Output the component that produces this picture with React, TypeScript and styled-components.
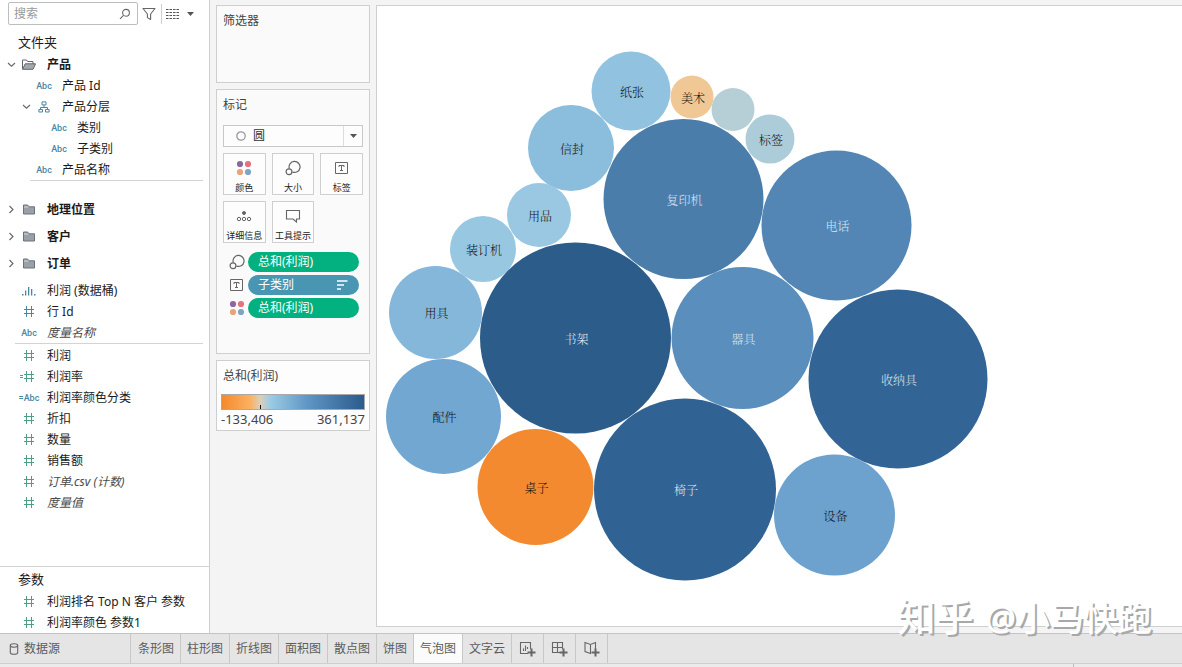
import React from 'react';
import styled, { createGlobalStyle, css } from 'styled-components';

const GlobalStyle = createGlobalStyle`
  *, *::before, *::after { box-sizing: border-box; }
  body {
    margin: 0;
    background: #f4f4f4;
    color: #1a1a1a;
    font-family: 'Noto Sans', 'Noto Sans CJK SC', sans-serif;
    font-size: 12px;
    line-height: 20px;
  }
  button, input, select { font: inherit; color: inherit; }
  svg { display: block; flex: none; }
`;

const BLUE = '#4a87a3';
const GREEN = '#4f9f86';
const GREY = '#666666';

/* ---------- page frame ---------- */

const Page = styled.div`
  position: relative;
  display: flex;
  flex-direction: column;
  min-height: 100vh;
`;

const Workspace = styled.div`
  flex: 1;
  display: grid;
  grid-template-columns: 210px 154px minmax(0, 1fr);
  column-gap: 6px;
`;

const Sidebar = styled.aside`
  display: flex;
  flex-direction: column;
  background: #ffffff;
  border-right: 1px solid #cfcfcf;
`;

const Shelves = styled.div`
  display: flex;
  flex-direction: column;
  gap: 6px;
  padding-top: 5px;
`;

const Canvas = styled.main`
  margin: 5px 0 6px;
  background: #ffffff;
  border: 1px solid #cfcfcf;
  border-right: 0;
`;

/* ---------- data pane ---------- */

const SearchBar = styled.div`
  display: flex;
  align-items: center;
  height: 27px;
  padding: 0 13px 0 8px;
`;

const SearchBox = styled.label`
  display: flex;
  align-items: center;
  width: 130px;
  height: 23px;
  padding: 0 6px 0 5px;
  border: 1px solid #bdbdbd;
  border-radius: 2px;
`;

const SearchInput = styled.input`
  flex: 1;
  min-width: 0;
  padding: 0;
  border: 0;
  outline: 0;
  background: none;
  &::placeholder { color: #999999; opacity: 1; }
`;

const ToolButton = styled.button<{ $divided?: boolean }>`
  display: flex;
  align-items: center;
  gap: 8px;
  height: 20px;
  padding: 0 5px 0 4px;
  border: 0;
  border-left: ${(p) => (p.$divided ? '1px solid #cfcfcf' : '0')};
  background: none;
`;

const PaneTitle = styled.h2`
  margin: 0;
  padding: 2px 18px;
  font-size: 13px;
  font-weight: 400;
  line-height: 20px;
`;

const FieldGroup = styled.div<{ $gap: number }>`
  padding-top: ${(p) => p.$gap}px;
`;

const FieldList = styled.ul<{ $spaced?: boolean }>`
  margin: 0;
  padding: ${(p) => (p.$spaced ? '15px 0 3px' : '0')};
  list-style: none;
`;

const FieldRow = styled.li<{ $level?: number; $tall?: boolean }>`
  display: grid;
  grid-template-columns: 12px 22px 1fr;
  align-items: center;
  height: ${(p) => (p.$tall ? 27 : 21)}px;
  padding-left: ${(p) => 6 + 15 * (p.$level ?? 0)}px;
`;

const Toggle = styled.button`
  display: flex;
  justify-content: center;
  width: 11px;
  padding: 0;
  border: 0;
  background: none;
`;

const IconCell = styled.span<{ $color: string }>`
  grid-column: 2;
  display: flex;
  justify-content: center;
  align-items: center;
  color: ${(p) => p.$color};
`;

const TypeText = styled.span`
  font-family: Roboto, sans-serif;
  font-size: 9px;
  font-weight: 500;
  line-height: 12px;
`;

const FieldName = styled.span<{ $bold?: boolean; $italic?: boolean }>`
  padding-left: 7px;
  white-space: nowrap;
  font-weight: ${(p) => (p.$bold ? 700 : 400)};
  ${(p) => p.$italic && css`
    font-style: italic;
    color: #4a4a4a;
  `}
`;

const Rule = styled.hr<{ $inset: number }>`
  width: auto;
  height: 1px;
  margin: 0 6px 0 ${(p) => p.$inset}px;
  border: 0;
  background: #d4d4d4;
`;

const Parameters = styled.section`
  margin-top: auto;
  border-top: 1px solid #d4d4d4;
`;

/* ---------- shelves ---------- */

const Card = styled.section<{ $minHeight: number }>`
  min-height: ${(p) => p.$minHeight}px;
  padding: 5px 6px;
  border: 1px solid #cfcfcf;
  background: #fafafa;
`;

const CardTitle = styled.h2`
  margin: 0;
  color: #444444;
  font-size: 12px;
  font-weight: 400;
  line-height: 20px;
`;

const MarkPicker = styled.label`
  display: grid;
  grid-template-columns: 29px 1fr 18px;
  align-items: center;
  height: 22px;
  margin-top: 10px;
  border: 1px solid #c8c8c8;
  background: #fdfdfd;
  color: ${GREY};
  svg { justify-self: center; }
  svg:first-child { justify-self: end; margin-right: 7px; }
`;

const MarkSelect = styled.select`
  appearance: none;
  height: 20px;
  padding: 0;
  border: 0;
  border-right: 1px solid #dddddd;
  outline: 0;
  background: none;
  color: #333333;
`;

const MarkGrid = styled.div`
  display: grid;
  grid-template-columns: repeat(3, 1fr);
  gap: 6px;
  margin-top: 6px;
`;

const MarkButton = styled.button`
  display: flex;
  flex-direction: column;
  align-items: center;
  justify-content: space-between;
  height: 42px;
  padding: 6px 0 0;
  border: 1px solid #cfcfcf;
  background: #fdfdfd;
  color: #222222;
  font-size: 9px;
  line-height: 12px;
  white-space: nowrap;
`;

const PillList = styled.ul`
  display: grid;
  gap: 3px;
  margin: 9px 0 0;
  padding: 0 4px 0 6px;
  list-style: none;
`;

const PillRow = styled.li`
  display: grid;
  grid-template-columns: 19px 1fr;
  align-items: center;
`;

const Pill = styled.button<{ $color: string }>`
  display: flex;
  align-items: center;
  justify-content: space-between;
  height: 20px;
  padding: 0 11px 0 10px;
  border: 0;
  border-radius: 10px;
  background: ${(p) => p.$color};
  color: #ffffff;
  line-height: 20px;
`;

const LegendCard = styled(Card)`
  padding: 5px 4px 0;
  background: #fdfdfd;
`;

const LegendTitle = styled(CardTitle)`
  padding-left: 2px;
`;

const Ramp = styled.div`
  display: flex;
  align-items: flex-end;
  height: 16px;
  margin-top: 8px;
  padding-left: 38px;
  border: 1px solid #a9a9a9;
  background: linear-gradient(90deg, #f4892c 0%, #fbb162 20%, #dccfbb 27%, #9bcbe4 34%, #5f96c5 60%, #2a5b8c 100%);
  &::after {
    content: '';
    width: 1px;
    height: 4px;
    background: #111111;
  }
`;

const RampEnds = styled.div`
  display: flex;
  justify-content: space-between;
  color: #444444;
  font-size: 13px;
  line-height: 19px;
`;

/* ---------- sheet tabs ---------- */

const TabBar = styled.nav`
  display: flex;
  height: 31px;
  border-top: 1px solid #c4c4c4;
  border-bottom: 1px solid #cfcfcf;
  background: #e5e5e5;
`;

const Tab = styled.button<{ $active?: boolean }>`
  display: flex;
  align-items: center;
  padding: 0 6px;
  border: 0;
  border-right: 1px solid #c8c8c8;
  background: ${(p) => (p.$active ? '#fbfbfb' : 'transparent')};
  color: #5c5c5c;
  white-space: nowrap;
`;

const SourceTab = styled(Tab)`
  gap: 5px;
  width: 131px;
  margin-right: 1px;
  padding: 0 9px;
`;

const NewSheetTab = styled(Tab)`
  justify-content: center;
  width: 32px;
`;

const StatusBar = styled.footer`
  display: flex;
  justify-content: flex-end;
  height: 3px;
  background: #ebebeb;
`;

const StatusCell = styled.div`
  width: 109px;
  border-left: 1px solid #bdbdbd;
`;

const Watermark = styled.div`
  position: absolute;
  right: 30px;
  bottom: 25px;
  display: flex;
  align-items: baseline;
  gap: 12px;
  color: #ffffff;
  font-size: 34px;
  font-weight: 500;
  line-height: 48px;
  text-shadow: 2px 2px 0 #a8a8a8;
  pointer-events: none;
`;

const WatermarkBrand = styled.span`
  font-size: 38px;
`;

/* ---------- chart ---------- */

const Chart = styled.svg`
  width: 100%;
  height: auto;
  text {
    font-family: 'Noto Serif CJK SC', 'Noto Sans CJK SC', serif;
    font-size: 12px;
    font-weight: 300;
    text-anchor: middle;
    dominant-baseline: central;
  }
`;

type Bubble = { name: string; x: number; y: number; r: number; fill: string; light?: boolean };

const bubbles: Bubble[] = [
  { name: '纸张', x: 254, y: 85, r: 39.5, fill: '#91c3e0' },
  { name: '美术', x: 315, y: 91, r: 21.5, fill: '#efc895' },
  { name: '', x: 356, y: 103.5, r: 21.5, fill: '#b6ced5' },
  { name: '标签', x: 393, y: 133, r: 24.5, fill: '#acccd9' },
  { name: '信封', x: 194, y: 142, r: 43, fill: '#8bbddd' },
  { name: '复印机', x: 306.5, y: 193, r: 80, fill: '#4b7dab', light: true },
  { name: '电话', x: 459.5, y: 219.5, r: 75, fill: '#5386b4', light: true },
  { name: '用品', x: 162, y: 209, r: 32, fill: '#9ac8e2' },
  { name: '装订机', x: 106, y: 243, r: 33, fill: '#98c7e2' },
  { name: '书架', x: 198.5, y: 332, r: 95.5, fill: '#2b5c8a', light: true },
  { name: '用具', x: 58.5, y: 306.5, r: 46.5, fill: '#84b7da' },
  { name: '器具', x: 365.5, y: 332, r: 71, fill: '#5a8ebd', light: true },
  { name: '收纳具', x: 521, y: 373, r: 89.5, fill: '#326595', light: true },
  { name: '配件', x: 66.5, y: 410.5, r: 57.5, fill: '#71a7d0' },
  { name: '桌子', x: 158.5, y: 481, r: 58, fill: '#f48a30' },
  { name: '椅子', x: 308, y: 483.5, r: 91, fill: '#306394', light: true },
  { name: '设备', x: 457.5, y: 509, r: 60.5, fill: '#6ca2cd' },
];

/* ---------- icons ---------- */

const SearchIcon = () => (
  <svg width="12" height="12" viewBox="0 0 12 12" fill="none" stroke="#666" strokeWidth="1.1">
    <circle cx="7" cy="4.8" r="3.4" />
    <path d="M4.5 7.3 1 10.8" />
  </svg>
);

const FilterIcon = () => (
  <svg width="14" height="14" viewBox="0 0 14 14" fill="none" stroke="#666" strokeWidth="1.1" strokeLinejoin="round">
    <path d="M1 1.5h12L8.6 7v5.5L5.4 10.6V7Z" />
  </svg>
);

const ListIcon = () => (
  <svg width="13" height="11" viewBox="0 0 13 11" stroke="#555" strokeWidth="1" strokeDasharray="2.5 1">
    <path d="M0 1.5h13M0 4.5h13M0 7.5h13M0 10.5h13" />
  </svg>
);

const CaretIcon = () => (
  <svg width="7" height="4" viewBox="0 0 7 4" fill="#555">
    <path d="M0 0h7L3.5 4Z" />
  </svg>
);

const Chevron = ({ open }: { open?: boolean }) => (
  <svg width="9" height="9" viewBox="0 0 9 9" fill="none" stroke="#666" strokeWidth="1.1">
    <path d={open ? 'M1 3 4.5 6.2 8 3' : 'M2.5 1 6 4.5 2.5 8'} />
  </svg>
);

const OpenFolderIcon = () => (
  <svg width="14" height="11" viewBox="0 0 14 11" stroke="#666" strokeWidth="1" strokeLinejoin="round">
    <path fill="#fff" d="M.5 10V1h4l1 1.5h5.5V5" />
    <path fill="#a4a9ae" d="M.5 10.3 3.2 4.8h10.3L11 10.3Z" />
  </svg>
);

const FolderIcon = () => (
  <svg width="12" height="11" viewBox="0 0 12 11" stroke="#6c7278" strokeWidth="1">
    <path fill="#9aa0a8" d="M.5 10V1h4.200l1 1.800h5.800V10Z" />
    <path d="M1 3h4.500" stroke="#d5d8db" />
  </svg>
);

const HierarchyIcon = () => (
  <svg width="12" height="12" viewBox="0 0 12 12" fill="none" stroke="currentColor" strokeWidth="1">
    <path d="M4 .9h4v3H4ZM6 4v2.500M2.500 8.500v-2h7v2M.9 8.500h3.600v2.500H.9ZM7.500 8.500h3.600v2.500H7.500Z" />
  </svg>
);

const BinsIcon = () => (
  <svg width="14" height="10" viewBox="0 0 14 10" fill="currentColor">
    <path d="M0 8h1.500v1.500H0ZM3 4.500h1.300v5H3ZM6 1h1.300v8.500H6ZM9 3h1.300v6.500H9ZM12 8h1.500v1.500H12Z" />
  </svg>
);

const HashIcon = ({ calc }: { calc?: boolean }) => (
  <svg
    width={calc ? 20 : 12}
    height="11"
    viewBox={calc ? '-6 0 20 11' : '0 0 12 11'}
    fill="none"
    stroke="currentColor"
    strokeWidth="1"
  >
    {calc ? (
      <path d="M-1 3.500H9M-1 7.500H9M1.500 0v11M6.500 0v11M-5 4.500h3M-5 6.500h3" />
    ) : (
      <path d="M1 3.500h10M1 7.500h10M3.500 0v11M8.500 0v11" />
    )}
  </svg>
);

const ColorIcon = () => (
  <svg width="16" height="16" viewBox="0 0 16 16">
    <circle cx="4" cy="4" r="3.100" fill="#8a6a9c" />
    <circle cx="12" cy="4" r="3.100" fill="#e8717e" />
    <circle cx="4" cy="12" r="3.100" fill="#eba376" />
    <circle cx="12" cy="12" r="3.100" fill="#7ea3c6" />
  </svg>
);

const SizeIcon = () => (
  <svg width="16" height="16" viewBox="0 0 16 16" fill="none" stroke="#666" strokeWidth="1.200">
    <path d="M4.300 8.600A5.500 5.500 0 1 1 7.400 12" />
    <circle cx="4" cy="11.800" r="2.900" />
  </svg>
);

const LabelIcon = () => (
  <svg width="16" height="16" viewBox="0 0 16 16" fill="none" stroke="#666" strokeWidth="1">
    <path d="M1.500 2.500h12v11h-12Z" />
    <path d="M5 7V5.500h5V7M7.500 5.500v5M6 10.500h3" />
  </svg>
);

const DetailIcon = () => (
  <svg width="16" height="16" viewBox="0 0 16 16" fill="none" stroke="#666" strokeWidth="1">
    <circle cx="8" cy="5" r="1.500" fill="#666" />
    <circle cx="3" cy="11" r="1.700" />
    <circle cx="8" cy="11" r="1.700" />
    <circle cx="13" cy="11" r="1.700" />
  </svg>
);

const TooltipIcon = () => (
  <svg width="16" height="16" viewBox="0 0 16 16" fill="none" stroke="#666" strokeWidth="1.100">
    <path d="M1.500 2.500h13v8.500h-3v3L8 11H1.500Z" />
  </svg>
);

const CircleIcon = () => (
  <svg width="10" height="10" viewBox="0 0 10 10" fill="none" stroke="#999" strokeWidth="1.300">
    <circle cx="5" cy="5" r="4.200" />
  </svg>
);

const SortIcon = () => (
  <svg width="11" height="10" viewBox="0 0 11 10" stroke="#fff" strokeWidth="1.600">
    <path d="M0 1h10.500M0 5h7M0 9h4" />
  </svg>
);

const SourceIcon = () => (
  <svg width="10" height="12" viewBox="0 0 10 12" fill="none" stroke="#666" strokeWidth="1.100">
    <ellipse cx="5" cy="2.500" rx="3.700" ry="1.700" />
    <path d="M1.300 2.500v7c0 2.300 7.400 2.300 7.400 0v-7" />
  </svg>
);

const newSheetShapes = {
  sheet: 'M9 12.500H1.500v-11h10V8M4.500 10V7.500M6.500 10V4.500M8.500 8V6',
  dashboard: 'M9 11.500H1.500v-10h10V8M1.500 6.500h10M6.500 1.500v10',
  story: 'M12.500 8V1.500L7.500 3.500 2 1.500v9l5.500 2V3.500',
};

const NewSheetIcon = ({ kind }: { kind: keyof typeof newSheetShapes }) => (
  <svg width="17" height="16" viewBox="0 0 17 16" fill="none" stroke="#666" strokeWidth="1.100">
    <path d={newSheetShapes[kind]} />
    <path d="M12.500 7.500v8M8.500 11.500h8" strokeWidth="2" />
  </svg>
);

/* ---------- fields ---------- */

type FieldType = 'text' | 'calcText' | 'number' | 'calcNumber' | 'bins' | 'hierarchy' | 'folder' | 'openFolder';

type Field = { name: string; type: FieldType; level?: number; measure?: boolean; italic?: boolean };

const typeIcons: Record<FieldType, React.ReactNode> = {
  text: <TypeText>Abc</TypeText>,
  calcText: <TypeText>=Abc</TypeText>,
  number: <HashIcon />,
  calcNumber: <HashIcon calc />,
  bins: <BinsIcon />,
  hierarchy: <HierarchyIcon />,
  folder: <FolderIcon />,
  openFolder: <OpenFolderIcon />,
};

const productFields: Field[] = [
  { name: '产品', type: 'openFolder' },
  { name: '产品 Id', type: 'text', level: 1 },
  { name: '产品分层', type: 'hierarchy', level: 1 },
  { name: '类别', type: 'text', level: 2 },
  { name: '子类别', type: 'text', level: 2 },
  { name: '产品名称', type: 'text', level: 1 },
];

const folders: Field[] = ['地理位置', '客户', '订单'].map((name) => ({ name, type: 'folder' }));

const looseFields: Field[] = [
  { name: '利润 (数据桶)', type: 'bins' },
  { name: '行 Id', type: 'number' },
  { name: '度量名称', type: 'text', italic: true },
];

const measures: Field[] = [
  { name: '利润', type: 'number', measure: true },
  { name: '利润率', type: 'calcNumber', measure: true },
  { name: '利润率颜色分类', type: 'calcText' },
  { name: '折扣', type: 'number', measure: true },
  { name: '数量', type: 'number', measure: true },
  { name: '销售额', type: 'number', measure: true },
  { name: '订单.csv (计数)', type: 'number', measure: true, italic: true },
  { name: '度量值', type: 'number', measure: true, italic: true },
];

const parameters: Field[] = [
  { name: '利润排名 Top N 客户 参数', type: 'number', measure: true },
  { name: '利润率颜色 参数1', type: 'number', measure: true },
];

const Fields = ({ items, tall }: { items: Field[]; tall?: boolean }) => (
  <FieldList $spaced={tall}>
    {items.map((f) => {
      const isFolder = f.type === 'folder' || f.type === 'openFolder';
      return (
        <FieldRow key={f.name} $level={f.level} $tall={tall}>
          {(isFolder || f.type === 'hierarchy') && (
            <Toggle aria-label={f.name} aria-expanded={f.type !== 'folder'}>
              <Chevron open={f.type !== 'folder'} />
            </Toggle>
          )}
          <IconCell $color={f.measure ? GREEN : BLUE}>{typeIcons[f.type]}</IconCell>
          <FieldName $bold={isFolder} $italic={f.italic}>{f.name}</FieldName>
        </FieldRow>
      );
    })}
  </FieldList>
);

const markButtons = [
  { name: '颜色', icon: <ColorIcon /> },
  { name: '大小', icon: <SizeIcon /> },
  { name: '标签', icon: <LabelIcon /> },
  { name: '详细信息', icon: <DetailIcon /> },
  { name: '工具提示', icon: <TooltipIcon /> },
];

const sheets = ['条形图', '柱形图', '折线图', '面积图', '散点图', '饼图', '气泡图', '文字云'];

export default function App() {
  return (
    <>
      <GlobalStyle />
      <Page>
        <Workspace>
          <Sidebar>
            <SearchBar>
              <SearchBox>
                <SearchInput type="text" placeholder="搜索" aria-label="搜索" />
                <SearchIcon />
              </SearchBox>
              <ToolButton aria-label="筛选"><FilterIcon /></ToolButton>
              <ToolButton aria-label="视图" $divided><ListIcon /><CaretIcon /></ToolButton>
            </SearchBar>
            <FieldGroup $gap={3}>
              <PaneTitle>文件夹</PaneTitle>
              <Fields items={productFields} />
            </FieldGroup>
            <Rule $inset={30} />
            <Fields items={folders} tall />
            <Fields items={looseFields} />
            <Rule $inset={15} />
            <FieldGroup $gap={1}>
              <Fields items={measures} />
            </FieldGroup>
            <Parameters>
              <PaneTitle>参数</PaneTitle>
              <Fields items={parameters} />
            </Parameters>
          </Sidebar>

          <Shelves>
            <Card $minHeight={78}>
              <CardTitle>筛选器</CardTitle>
            </Card>
            <Card $minHeight={265}>
              <CardTitle>标记</CardTitle>
              <MarkPicker>
                <CircleIcon />
                <MarkSelect aria-label="标记类型" defaultValue="圆">
                  <option>圆</option>
                </MarkSelect>
                <CaretIcon />
              </MarkPicker>
              <MarkGrid>
                {markButtons.map((b) => (
                  <MarkButton key={b.name}>{b.icon}{b.name}</MarkButton>
                ))}
              </MarkGrid>
              <PillList>
                <PillRow><SizeIcon /><Pill $color="#03b180">总和(利润)</Pill></PillRow>
                <PillRow><LabelIcon /><Pill $color="#4996b2">子类别<SortIcon /></Pill></PillRow>
                <PillRow><ColorIcon /><Pill $color="#03b180">总和(利润)</Pill></PillRow>
              </PillList>
            </Card>
            <LegendCard $minHeight={71}>
              <LegendTitle>总和(利润)</LegendTitle>
              <Ramp />
              <RampEnds><span>-133,406</span><span>361,137</span></RampEnds>
            </LegendCard>
          </Shelves>

          <Canvas>
            <Chart viewBox="0 0 805 620" role="img" aria-label="气泡图">
              {bubbles.map((b) => (
                <g key={b.name}>
                  <circle cx={b.x} cy={b.y} r={b.r} fill={b.fill} />
                  <text x={b.x + 1} y={b.y} fill={b.light ? '#dce6f0' : '#111111'}>{b.name}</text>
                </g>
              ))}
            </Chart>
          </Canvas>
        </Workspace>

        <TabBar>
          <SourceTab><SourceIcon />数据源</SourceTab>
          {sheets.map((s) => (
            <Tab key={s} $active={s === '气泡图'}>{s}</Tab>
          ))}
          <NewSheetTab aria-label="新建工作表"><NewSheetIcon kind="sheet" /></NewSheetTab>
          <NewSheetTab aria-label="新建仪表板"><NewSheetIcon kind="dashboard" /></NewSheetTab>
          <NewSheetTab aria-label="新建故事"><NewSheetIcon kind="story" /></NewSheetTab>
        </TabBar>
        <StatusBar><StatusCell /></StatusBar>
        <Watermark><WatermarkBrand>知乎</WatermarkBrand><span>@小马快跑</span></Watermark>
      </Page>
    </>
  );
}
